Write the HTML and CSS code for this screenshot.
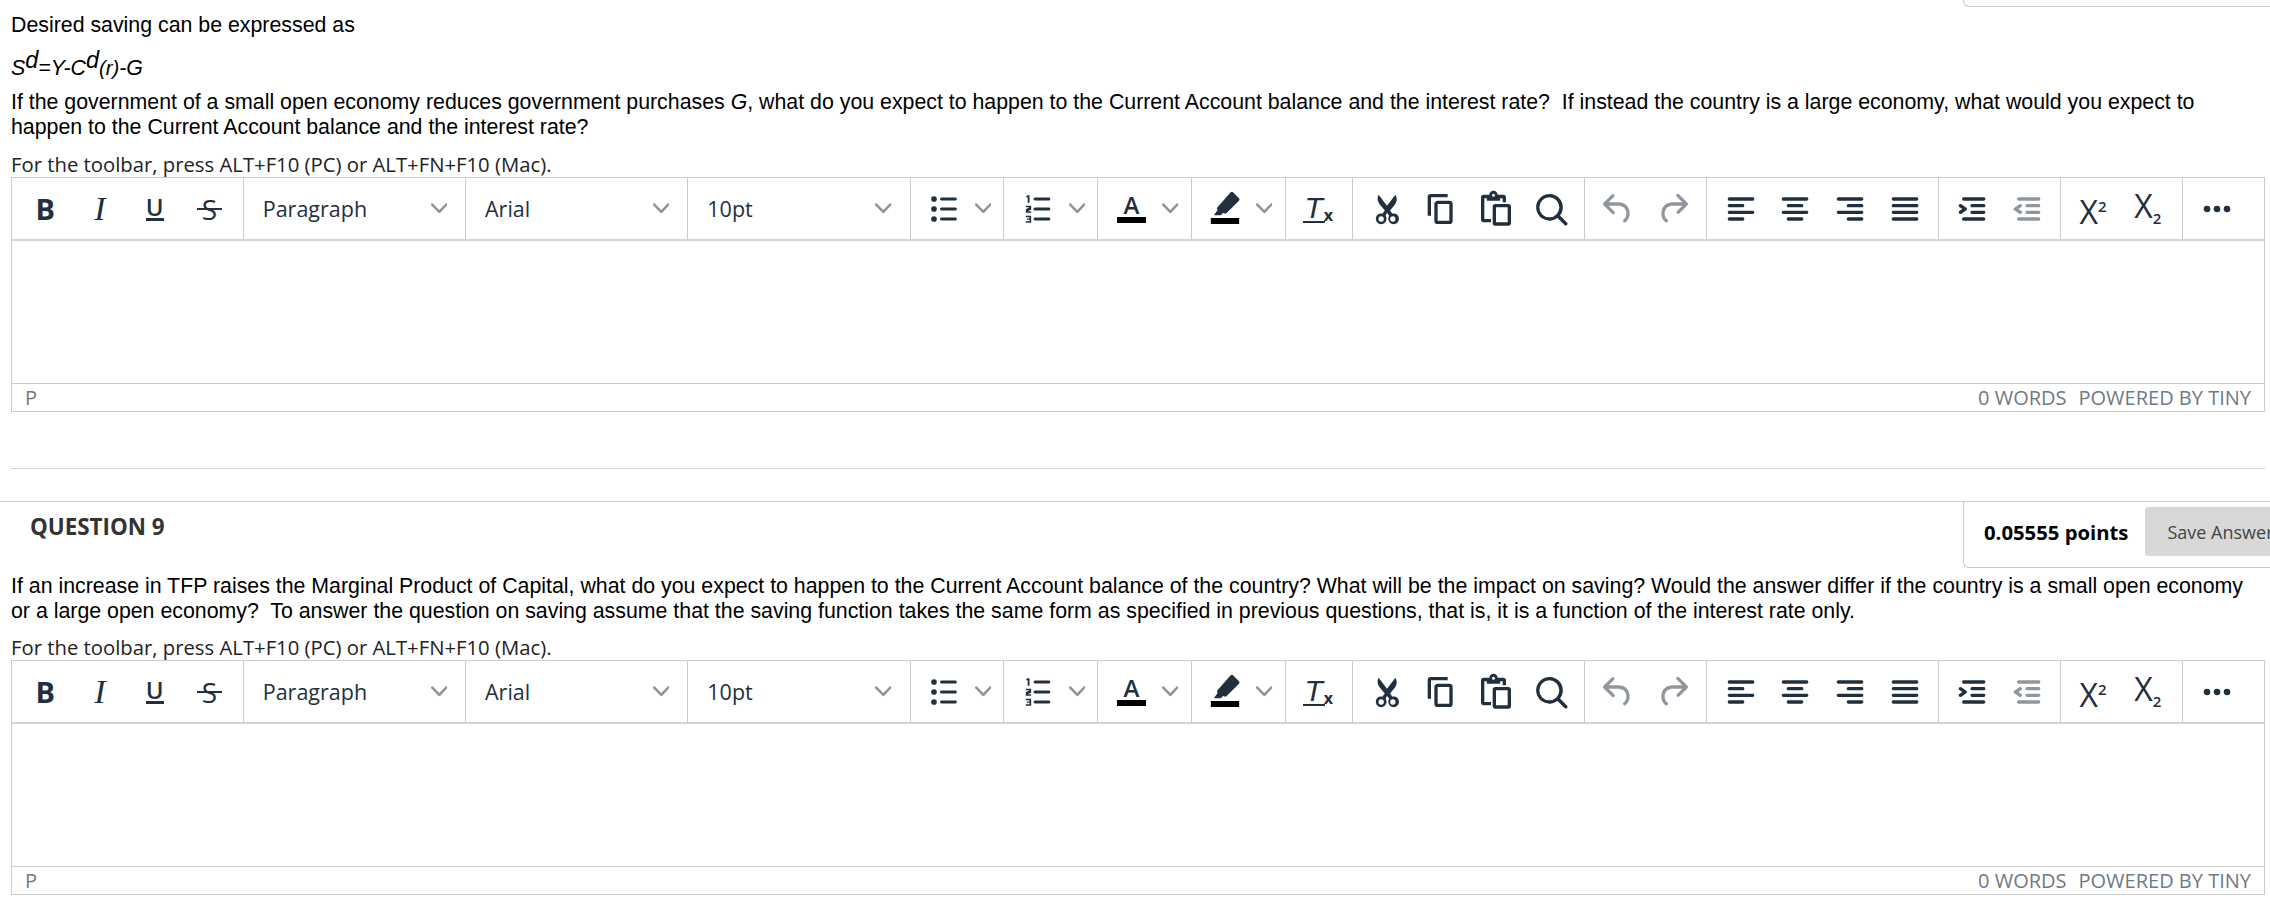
FILE: index.html
```html
<!DOCTYPE html>
<html lang="en">
<head>
    <meta charset="UTF-8">
    <title>Test</title>
    <link rel="stylesheet" href="styles.css">
</head>
<body>
    <!-- icons used by both toolbars -->
    <svg class="sprite" xmlns="http://www.w3.org/2000/svg">
        <symbol id="i-chevron" viewBox="0 0 10 10"><path d="M8.7 2.2c.3-.3.8-.3 1 0 .4.4.4.9 0 1.2L5.7 7.8c-.3.3-.9.3-1.2 0L.2 3.4a.8.8 0 0 1 0-1.2c.3-.3.8-.3 1.1 0L5 6l3.7-3.8z"/></symbol>
        <symbol id="i-bullist" viewBox="0 0 24 24"><path d="M10.500 5.100h8.300c.5 0 .9.4.9.9s-.4.9-.9.9h-8.300a.9.9 0 0 1 0-1.800zm0 6h8.300c.5 0 .9.4.9.9s-.4.9-.9.9h-8.300a.9.9 0 0 1 0-1.800zm0 6h8.300c.5 0 .9.4.9.9s-.4.9-.9.9h-8.300a.9.9 0 0 1 0-1.800z"/><circle cx="6" cy="6" r="1.700"/><circle cx="6" cy="12" r="1.700"/><circle cx="6" cy="18" r="1.700"/></symbol>
        <symbol id="i-numlist" viewBox="0 0 24 24"><path d="M10.200 5.100h8.300c.5 0 .9.400.9.900s-.4.900-.9.900h-8.300a.9.900 0 0 1 0-1.800zm0 6h8.300c.5 0 .9.400.9.900s-.4.900-.9.900h-8.300a.9.900 0 0 1 0-1.800zm0 6h8.300c.5 0 .9.400.9.900s-.4.900-.9.900h-8.300a.9.900 0 0 1 0-1.800z"/><path d="M5.800 3.800h1.100v4.400H5.800V5h-.9v-.6zM4.700 10h3.200v2.400l-2.200 1h2.200v.9H4.700v-2.200l2.200-1.100H4.700zM4.700 16h3.200v4.200H4.700v-.9h2.200v-.8H5.400v-.8h1.500v-.8H4.700z"/></symbol>
        <symbol id="i-marker" viewBox="0 0 24 24"><path transform="translate(0 -1.600)" d="M15.400 3.600c.4-.4 1-.4 1.400 0l3.600 3.600c.4.400.4 1 0 1.400l-7.600 7.600c-.4.400-1 .4-1.400 0l-.4-.4-1.500 1.500H5.700l-.2-.2 2.200-3-.2-.2c-.4-.4-.4-1 0-1.400z"/><rect x="3.500" y="17.400" width="17" height="3.600" fill="#000"/></symbol>
        <symbol id="i-cut" viewBox="0 0 24 24"><path d="M7 3.500 12 10l5-6.500c1.300 2.400 1 4.200-.3 5.900l-2.900 3.500 1.500 2c1.900-.6 3.900.9 3.900 3 0 1.800-1.400 3.200-3.200 3.200s-3.200-1.400-3.200-3.200c0-.7.200-1.300.5-1.800L12 14.300l-.8 1.800c.3.500.5 1.100.5 1.800 0 1.800-1.400 3.200-3.200 3.200s-3.200-1.400-3.200-3.200c0-2.100 2-3.600 3.900-3l1.500-2-2.900-3.500C6.500 7.700 5.700 5.900 7 3.500zm1.500 12.900a1.600 1.600 0 1 0 0 3.200 1.600 1.600 0 0 0 0-3.200zm7 0a1.600 1.600 0 1 0 0 3.200 1.600 1.600 0 0 0 0-3.200z" fill-rule="evenodd"/></symbol>
        <symbol id="i-copy" viewBox="0 0 24 24"><path d="M16 3H6a2 2 0 0 0-2 2v11h2V5h10V3zm1 4a2 2 0 0 1 2 2v10a2 2 0 0 1-2 2h-7a2 2 0 0 1-2-2V9c0-1.200.9-2 2-2h7zm0 12V9h-7v10h7z"/></symbol>
        <symbol id="i-paste" viewBox="0 0 24 24"><path d="M8 3.500C8 2.100 9.100 1 10.500 1S13 2.100 13 3.500h3.500c.8 0 1.500.7 1.500 1.500v3h-2V5.500h-1.500V7h-8V5.500H5V18h4v2H4.500c-.8 0-1.500-.7-1.500-1.500v-13.500C3 4.200 3.700 3.500 4.500 3.500zm2.500-.7a.9.9 0 1 0 0 1.800.9.900 0 0 0 0-1.800zM11.500 9h8c.8 0 1.500.7 1.500 1.500v10c0 .8-.7 1.500-1.500 1.500h-8c-.8 0-1.500-.7-1.500-1.500v-10c0-.8.7-1.500 1.500-1.500zm.5 2v9h7v-9z" fill-rule="evenodd"/></symbol>
        <symbol id="i-search" viewBox="0 0 24 24"><path d="M16 17.300a8 8 0 1 1 1.400-1.400l4.300 4.400a1 1 0 0 1-1.400 1.400l-4.400-4.300zm-5-.3a6 6 0 1 0 0-12 6 6 0 0 0 0 12z"/></symbol>
        <symbol id="i-undo" viewBox="0 0 24 24"><path d="M6.400 8H12c3.700 0 6.200 2 6.800 5.100.6 2.700-.4 5.600-2.300 6.800a1 1 0 0 1-1-1.800c1.100-.6 1.800-2.700 1.400-4.600-.5-2.100-2.100-3.500-4.900-3.500H6.400l3.300 3.300a1 1 0 1 1-1.400 1.400l-5-5a1 1 0 0 1 0-1.400l5-5a1 1 0 0 1 1.400 1.400L6.400 8z"/></symbol>
        <symbol id="i-redo" viewBox="0 0 24 24"><path d="M17.600 10H12c-2.800 0-4.400 1.400-4.900 3.500-.4 2 .3 4 1.400 4.600a1 1 0 1 1-1 1.800c-2-1.200-2.900-4.100-2.300-6.800.6-3 3-5.100 6.800-5.100h5.600l-3.300-3.300a1 1 0 1 1 1.400-1.400l5 5a1 1 0 0 1 0 1.400l-5 5a1 1 0 0 1-1.400-1.400l3.300-3.300z"/></symbol>
        <symbol id="i-left" viewBox="0 0 24 24"><path d="M5 5h14c.6 0 1 .4 1 1s-.4 1-1 1H5a1 1 0 1 1 0-2zm0 4h8c.6 0 1 .4 1 1s-.4 1-1 1H5a1 1 0 1 1 0-2zm0 8h8c.6 0 1 .4 1 1s-.4 1-1 1H5a1 1 0 0 1 0-2zm0-4h14c.6 0 1 .4 1 1s-.4 1-1 1H5a1 1 0 0 1 0-2z"/></symbol>
        <symbol id="i-center" viewBox="0 0 24 24"><path d="M5 5h14c.6 0 1 .4 1 1s-.4 1-1 1H5a1 1 0 1 1 0-2zm3 4h8c.6 0 1 .4 1 1s-.4 1-1 1H8a1 1 0 1 1 0-2zm0 8h8c.6 0 1 .4 1 1s-.4 1-1 1H8a1 1 0 0 1 0-2zm-3-4h14c.6 0 1 .4 1 1s-.4 1-1 1H5a1 1 0 0 1 0-2z"/></symbol>
        <symbol id="i-right" viewBox="0 0 24 24"><path d="M5 5h14c.6 0 1 .4 1 1s-.4 1-1 1H5a1 1 0 1 1 0-2zm6 4h8c.6 0 1 .4 1 1s-.4 1-1 1h-8a1 1 0 0 1 0-2zm0 8h8c.6 0 1 .4 1 1s-.4 1-1 1h-8a1 1 0 0 1 0-2zm-6-4h14c.6 0 1 .4 1 1s-.4 1-1 1H5a1 1 0 0 1 0-2z"/></symbol>
        <symbol id="i-justify" viewBox="0 0 24 24"><path d="M5 5h14c.6 0 1 .4 1 1s-.4 1-1 1H5a1 1 0 1 1 0-2zm0 4h14c.6 0 1 .4 1 1s-.4 1-1 1H5a1 1 0 1 1 0-2zm0 4h14c.6 0 1 .4 1 1s-.4 1-1 1H5a1 1 0 0 1 0-2zm0 4h14c.6 0 1 .4 1 1s-.4 1-1 1H5a1 1 0 0 1 0-2z"/></symbol>
        <symbol id="i-indent" viewBox="0 0 24 24"><path d="M7 5h12c.6 0 1 .4 1 1s-.4 1-1 1H7a1 1 0 1 1 0-2zm5 4h7c.6 0 1 .4 1 1s-.4 1-1 1h-7a1 1 0 0 1 0-2zm0 4h7c.6 0 1 .4 1 1s-.4 1-1 1h-7a1 1 0 0 1 0-2zm-5 4h12a1 1 0 0 1 0 2H7a1 1 0 0 1 0-2zm-2.600-3.800L6.200 12l-1.800-1.200a1 1 0 0 1 1.200-1.600l3 2a1 1 0 0 1 0 1.600l-3 2a1 1 0 1 1-1.200-1.600z"/></symbol>
        <symbol id="i-outdent" viewBox="0 0 24 24"><path d="M7 5h12c.6 0 1 .4 1 1s-.4 1-1 1H7a1 1 0 1 1 0-2zm5 4h7c.6 0 1 .4 1 1s-.4 1-1 1h-7a1 1 0 0 1 0-2zm0 4h7c.6 0 1 .4 1 1s-.4 1-1 1h-7a1 1 0 0 1 0-2zm-5 4h12a1 1 0 0 1 0 2H7a1 1 0 0 1 0-2zm1.600-3.800a1 1 0 0 1-1.200 1.600l-3-2a1 1 0 0 1 0-1.600l3-2a1 1 0 0 1 1.200 1.600L6.800 12l1.800 1.200z"/></symbol>
        <symbol id="i-more" viewBox="0 0 24 24"><path d="M6 10a2 2 0 0 0-2 2c0 1.100.9 2 2 2a2 2 0 0 0 2-2 2 2 0 0 0-2-2zm12 0a2 2 0 0 0-2 2c0 1.100.9 2 2 2a2 2 0 0 0 2-2 2 2 0 0 0-2-2zm-6 0a2 2 0 0 0-2 2c0 1.100.9 2 2 2a2 2 0 0 0 2-2 2 2 0 0 0-2-2z"/></symbol>
    </svg>

    <div class="content">
        <div class="points-tail"></div>
        <p class="q-line">Desired saving can be expressed as</p>
        <p class="q-formula"><em>S<sup>d</sup>=Y-C<sup>d</sup><span class="small">(r)</span>-G</em></p>
        <p class="q-text">If the government of a small open economy reduces government purchases <em>G</em>, what do you expect to happen to the Current Account balance and the interest rate?&nbsp; If instead the country is a large economy, what would you expect to happen to the Current Account balance and the interest rate?</p>

        <div class="toolbar-hint">For the toolbar, press ALT+F10 (PC) or ALT+FN+F10 (Mac).</div>
        <div class="editor">
            <div class="toolbar">
                <div class="group">
                    <span class="btn t-bold">B</span>
                    <span class="btn t-italic">I</span>
                    <span class="btn"><span class="t-under">U</span></span>
                    <span class="btn"><span class="t-strike">S</span></span>
                </div>
                <div class="select">Paragraph<svg class="chev"><use href="#i-chevron"/></svg></div>
                <div class="select">Arial<svg class="chev"><use href="#i-chevron"/></svg></div>
                <div class="select">10pt<svg class="chev"><use href="#i-chevron"/></svg></div>
                <div class="group">
                    <span class="btn"><svg class="icon"><use href="#i-bullist"/></svg></span>
                    <span class="split"><svg class="chev"><use href="#i-chevron"/></svg></span>
                </div>
                <div class="group">
                    <span class="btn"><svg class="icon"><use href="#i-numlist"/></svg></span>
                    <span class="split"><svg class="chev"><use href="#i-chevron"/></svg></span>
                </div>
                <div class="group">
                    <span class="btn"><span class="t-color">A</span></span>
                    <span class="split"><svg class="chev"><use href="#i-chevron"/></svg></span>
                </div>
                <div class="group">
                    <span class="btn"><svg class="icon"><use href="#i-marker"/></svg></span>
                    <span class="split"><svg class="chev"><use href="#i-chevron"/></svg></span>
                </div>
                <div class="group">
                    <span class="btn"><span class="t-clear"><span class="t-clear-t">T</span><small>x</small></span></span>
                </div>
                <div class="group">
                    <span class="btn"><svg class="icon"><use href="#i-cut"/></svg></span>
                    <span class="btn"><svg class="icon"><use href="#i-copy"/></svg></span>
                    <span class="btn"><svg class="icon"><use href="#i-paste"/></svg></span>
                    <span class="btn"><svg class="icon"><use href="#i-search"/></svg></span>
                </div>
                <div class="group">
                    <span class="btn off"><svg class="icon"><use href="#i-undo"/></svg></span>
                    <span class="btn off"><svg class="icon"><use href="#i-redo"/></svg></span>
                </div>
                <div class="group">
                    <span class="btn"><svg class="icon"><use href="#i-left"/></svg></span>
                    <span class="btn"><svg class="icon"><use href="#i-center"/></svg></span>
                    <span class="btn"><svg class="icon"><use href="#i-right"/></svg></span>
                    <span class="btn"><svg class="icon"><use href="#i-justify"/></svg></span>
                </div>
                <div class="group">
                    <span class="btn"><svg class="icon"><use href="#i-indent"/></svg></span>
                    <span class="btn off"><svg class="icon"><use href="#i-outdent"/></svg></span>
                </div>
                <div class="group">
                    <span class="btn"><span class="t-script low">X<sup>2</sup></span></span>
                    <span class="btn"><span class="t-script high">X<sub>2</sub></span></span>
                </div>
                <div class="group last">
                    <span class="btn"><svg class="icon"><use href="#i-more"/></svg></span>
                </div>
            </div>
            <div class="edit-area"></div>
            <div class="statusbar">
                <span>P</span>
                <span class="status-right"><span>0 words</span><span>Powered by Tiny</span></span>
            </div>
        </div>

        <hr class="divider">
    </div>

    <section class="question">
        <div class="question-head">
            <h3>QUESTION 9</h3>
            <div class="points">
                <strong>0.05555 points</strong>
                <button class="save">Save Answer</button>
            </div>
        </div>
        <div class="content">
            <p class="q-text">If an increase in TFP raises the Marginal Product of Capital, what do you expect to happen to the Current Account balance of the country? What will be the impact on saving? Would the answer differ if the country is a small open economy or a large open economy?&nbsp; To answer the question on saving assume that the saving function takes the same form as specified in previous questions, that is, it is a function of the interest rate only.</p>

            <div class="toolbar-hint">For the toolbar, press ALT+F10 (PC) or ALT+FN+F10 (Mac).</div>
            <div class="editor">
                <div class="toolbar">
                    <div class="group">
                        <span class="btn t-bold">B</span>
                        <span class="btn t-italic">I</span>
                        <span class="btn"><span class="t-under">U</span></span>
                        <span class="btn"><span class="t-strike">S</span></span>
                    </div>
                    <div class="select">Paragraph<svg class="chev"><use href="#i-chevron"/></svg></div>
                    <div class="select">Arial<svg class="chev"><use href="#i-chevron"/></svg></div>
                    <div class="select">10pt<svg class="chev"><use href="#i-chevron"/></svg></div>
                    <div class="group">
                        <span class="btn"><svg class="icon"><use href="#i-bullist"/></svg></span>
                        <span class="split"><svg class="chev"><use href="#i-chevron"/></svg></span>
                    </div>
                    <div class="group">
                        <span class="btn"><svg class="icon"><use href="#i-numlist"/></svg></span>
                        <span class="split"><svg class="chev"><use href="#i-chevron"/></svg></span>
                    </div>
                    <div class="group">
                        <span class="btn"><span class="t-color">A</span></span>
                        <span class="split"><svg class="chev"><use href="#i-chevron"/></svg></span>
                    </div>
                    <div class="group">
                        <span class="btn"><svg class="icon"><use href="#i-marker"/></svg></span>
                        <span class="split"><svg class="chev"><use href="#i-chevron"/></svg></span>
                    </div>
                    <div class="group">
                        <span class="btn"><span class="t-clear"><span class="t-clear-t">T</span><small>x</small></span></span>
                    </div>
                    <div class="group">
                        <span class="btn"><svg class="icon"><use href="#i-cut"/></svg></span>
                        <span class="btn"><svg class="icon"><use href="#i-copy"/></svg></span>
                        <span class="btn"><svg class="icon"><use href="#i-paste"/></svg></span>
                        <span class="btn"><svg class="icon"><use href="#i-search"/></svg></span>
                    </div>
                    <div class="group">
                        <span class="btn off"><svg class="icon"><use href="#i-undo"/></svg></span>
                        <span class="btn off"><svg class="icon"><use href="#i-redo"/></svg></span>
                    </div>
                    <div class="group">
                        <span class="btn"><svg class="icon"><use href="#i-left"/></svg></span>
                        <span class="btn"><svg class="icon"><use href="#i-center"/></svg></span>
                        <span class="btn"><svg class="icon"><use href="#i-right"/></svg></span>
                        <span class="btn"><svg class="icon"><use href="#i-justify"/></svg></span>
                    </div>
                    <div class="group">
                        <span class="btn"><svg class="icon"><use href="#i-indent"/></svg></span>
                        <span class="btn off"><svg class="icon"><use href="#i-outdent"/></svg></span>
                    </div>
                    <div class="group">
                        <span class="btn"><span class="t-script low">X<sup>2</sup></span></span>
                        <span class="btn"><span class="t-script high">X<sub>2</sub></span></span>
                    </div>
                    <div class="group last">
                        <span class="btn"><svg class="icon"><use href="#i-more"/></svg></span>
                    </div>
                </div>
                <div class="edit-area"></div>
                <div class="statusbar">
                    <span>P</span>
                    <span class="status-right"><span>0 words</span><span>Powered by Tiny</span></span>
                </div>
            </div>
        </div>
    </section>
</body>
</html>
```

FILE: styles.css
```css
html {
    overflow: hidden;
}
body {
    margin: 0;
    background-color: #fff;
    color: #000;
    font-family: "Liberation Sans", Arial, sans-serif;
    font-size: 21.34px;
    overflow: hidden;
}
.sprite {
    display: none;
}
.content {
    padding: 0 5px 0 11px;
}
.points-tail {
    height: 7px;
    margin: 0 -5px 0 1952px;
    box-sizing: border-box;
    border: 1px solid #ccc;
    border-top: none;
    border-right: none;
    border-radius: 0 0 0 6px;
    background-color: #fbfbfb;
}
p {
    margin: 0;
}
.q-line {
    margin-top: 6px;
    line-height: 25px;
}
.q-formula {
    margin: 15px 0 -2px;
    line-height: 30px;
}
.q-formula sup {
    font-size: 1.1em;
    line-height: 0;
    vertical-align: 7px;
}
.q-formula .small {
    font-size: 0.95em;
}
.q-text {
    line-height: 25px;
    margin-top: 9px;
}
.question .q-text {
    margin: 6px 0 -1px;
}
.toolbar-hint {
    margin-top: 12px;
    line-height: 25px;
    font-family: "Open Sans", sans-serif;
    font-size: 20.3px;
    color: #222;
}

/* editor */
.editor {
    box-sizing: border-box;
    height: 235px;
    display: flex;
    flex-direction: column;
    border: 1px solid #ccc;
    font-family: "Open Sans", sans-serif;
}
.toolbar {
    display: flex;
    height: 61px;
    border-bottom: 2px solid #d4d4d4;
    color: #222f3e;
    flex-shrink: 0;
}
.group {
    display: flex;
    align-items: center;
    padding: 0 5.8px;
    border-right: 1px solid #ccc;
    box-sizing: border-box;
}
.group.last {
    border-right: none;
}
.btn {
    width: 49.2px;
    margin: 0 2.8px;
    display: flex;
    align-items: center;
    justify-content: center;
    line-height: 1;
}
.btn.off {
    color: #90969e;
}
.split {
    width: 29px;
    display: flex;
    justify-content: center;
    margin-left: -2.8px;
    margin-right: 0.3px;
}
.icon {
    width: 40px;
    height: 40px;
    flex-shrink: 0;
    fill: currentColor;
}
.chev {
    width: 16.5px;
    height: 16.5px;
    fill: #8f959d;
}
.select {
    width: 222.3px;
    box-sizing: border-box;
    padding: 0 18px 0 19px;
    display: flex;
    align-items: center;
    justify-content: space-between;
    border-right: 1px solid #ccc;
    font-size: 21.5px;
}
.t-bold {
    font-weight: 700;
    font-size: 29px;
}
.t-italic {
    font-family: "Liberation Serif", serif;
    font-style: italic;
    font-size: 34px;
}
.t-under {
    font-size: 24px;
    font-weight: 600;
    line-height: 20px;
    border-bottom: 3px solid #222f3e;
    padding-bottom: 1px;
}
.t-strike {
    position: relative;
    font-size: 28px;
}
.t-strike::after {
    content: "";
    position: absolute;
    left: -5px;
    right: -5px;
    top: 13px;
    height: 2px;
    background-color: #222f3e;
}
.t-color {
    font-size: 24px;
    font-weight: 600;
    line-height: 22px;
    width: 29px;
    text-align: center;
    border-bottom: 6px solid #000;
    padding-bottom: 1px;
}
.t-clear {
    display: flex;
    align-items: flex-end;
    margin-left: -3px;
}
.t-clear-t {
    font-family: "Liberation Sans", sans-serif;
    font-style: italic;
    font-size: 30px;
    line-height: 26px;
    padding: 0 2px;
    border-bottom: 2px solid #222f3e;
}
.t-clear small {
    font-weight: 700;
    font-size: 16px;
    margin-left: -1px;
}
.t-script {
    font-size: 32px;
    margin-left: -3px;
}
.t-script.low {
    margin-top: 6px;
}
.t-script.high {
    margin-bottom: 6px;
}
.t-script sup,
.t-script sub {
    font-size: 15px;
    font-weight: 600;
    line-height: 0;
}
.t-script sup {
    vertical-align: 12px;
}
.t-script sub {
    vertical-align: -6px;
}
.edit-area {
    flex: 1;
}
.statusbar {
    height: 28px;
    box-sizing: border-box;
    border-top: 1px solid #ccc;
    padding: 0 13px;
    display: flex;
    align-items: center;
    justify-content: space-between;
    color: #6e7a86;
    font-size: 20px;
    text-transform: uppercase;
    flex-shrink: 0;
}
.status-right {
    display: flex;
    gap: 12px;
}
.divider {
    margin: 56px 0 32px;
    height: 0;
    border: none;
    border-top: 1px solid #d4d4d4;
}

/* question */
.question {
    border-top: 1px solid #ccc;
}
.question-head {
    display: flex;
    justify-content: space-between;
    align-items: flex-start;
}
.question-head h3 {
    margin: 12px 0 0 30px;
    line-height: 26px;
    font-family: "Open Sans", sans-serif;
    font-size: 22.4px;
    font-weight: 700;
    color: #333;
}
.points {
    box-sizing: border-box;
    width: 307px;
    height: 66px;
    padding: 5px 0 11px 20px;
    display: flex;
    align-items: center;
    gap: 17px;
    border: 1px solid #ccc;
    border-width: 0 0 1px 1px;
    border-radius: 0 0 0 6px;
    font-family: "Open Sans", sans-serif;
    overflow: hidden;
    flex-shrink: 0;
}
.points strong {
    font-size: 20.3px;
    white-space: nowrap;
}
.save {
    height: 49px;
    padding: 0 22px;
    border: none;
    border-radius: 3px 0 0 3px;
    background-color: #d8d8d8;
    color: #444;
    font-family: "Open Sans", sans-serif;
    font-size: 18px;
    white-space: nowrap;
    flex-shrink: 0;
}
```
